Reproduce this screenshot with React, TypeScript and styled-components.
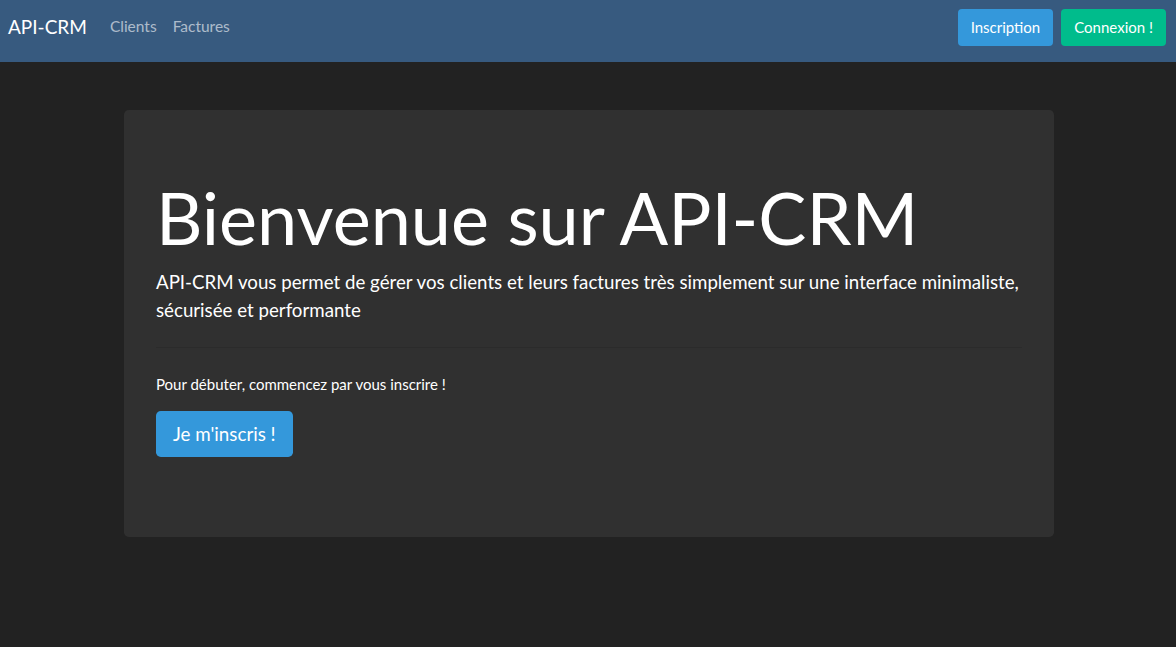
import React from "react";
import styled, { createGlobalStyle } from "styled-components";

const COLOR = {
  BODY: "#222222",
  PRIMARY: "#375a7f",
  INFO: "#3498db",
  SUCCESS: "#00bc8c",
  JUMBO: "#303030",
  WHITE: "#ffffff",
};

const GlobalStyle = createGlobalStyle`
  * {
    box-sizing: border-box;
  }

  body {
    margin: 0;
    background: ${COLOR.BODY};
    color: ${COLOR.WHITE};
    font-family: Lato, "Liberation Sans", sans-serif;
    font-size: 15px;
    line-height: 1.5;
  }
`;

const Navbar = styled.nav`
  display: flex;
  align-items: flex-start;
  justify-content: space-between;
  height: 62px;
  padding: 9px 10px 0 8px;
  background: ${COLOR.PRIMARY};
`;

const NavLeft = styled.div`
  display: flex;
  align-items: center;
  height: 36px;
`;

const Brand = styled.a`
  margin-right: 15px;
  font-size: 19px;
  line-height: 1.5;
  color: ${COLOR.WHITE};
  text-decoration: none;
  cursor: pointer;
`;

const NavLink = styled.a`
  padding: 8px;
  font-size: 15.5px;
  color: rgba(255, 255, 255, 0.6);
  text-decoration: none;
  cursor: pointer;
`;

const NavRight = styled.div`
  display: flex;
  align-items: center;
  gap: 8px;
`;

const Button = styled.button<{ $variant: "info" | "success"; $large?: boolean }>`
  border: 1px solid transparent;
  border-radius: ${(p) => (p.$large ? "4.8px" : "4px")};
  padding: ${(p) => (p.$large ? "8px 16px" : "6px 12px")};
  font-family: inherit;
  font-size: ${(p) => (p.$large ? "18.75px" : "15px")};
  line-height: 1.5;
  color: ${COLOR.WHITE};
  background: ${(p) => (p.$variant === "info" ? COLOR.INFO : COLOR.SUCCESS)};
  cursor: pointer;
`;

const Container = styled.main`
  max-width: 960px;
  margin: 0 auto;
  padding: 48px 14px 0 16px;
`;

const Jumbotron = styled.section`
  display: flex;
  flex-direction: column;
  align-items: flex-start;
  padding: 64px 32px;
  border-radius: 4.8px;
  background: ${COLOR.JUMBO};
`;

const Title = styled.h1`
  margin: 0 0 8px;
  font-size: 72px;
  font-weight: 400;
  line-height: 1.2;
`;

const Lead = styled.p`
  margin: 0;
  font-size: 18.7px;
  line-height: 1.5;
`;

const Divider = styled.hr`
  align-self: stretch;
  margin: 23px 0 25px;
  border: 0;
  border-top: 1px solid rgba(0, 0, 0, 0.1);
`;

const Text = styled.p`
  margin: 0 0 15px;
`;

const Actions = styled.div`
  margin-bottom: 16px;
`;

const App = (): JSX.Element => {
  return (
    <>
      <GlobalStyle />
      <Navbar>
        <NavLeft>
          <Brand>API-CRM</Brand>
          <NavLink>Clients</NavLink>
          <NavLink>Factures</NavLink>
        </NavLeft>
        <NavRight>
          <Button $variant="info">Inscription</Button>
          <Button $variant="success">Connexion !</Button>
        </NavRight>
      </Navbar>
      <Container>
        <Jumbotron>
          <Title>Bienvenue sur API-CRM</Title>
          <Lead>
            API-CRM vous permet de gérer vos clients et leurs factures très
            simplement sur une interface minimaliste, sécurisée et performante
          </Lead>
          <Divider />
          <Text>Pour débuter, commencez par vous inscrire !</Text>
          <Actions>
            <Button $variant="info" $large>
              Je m'inscris !
            </Button>
          </Actions>
        </Jumbotron>
      </Container>
    </>
  );
};

export default App;
